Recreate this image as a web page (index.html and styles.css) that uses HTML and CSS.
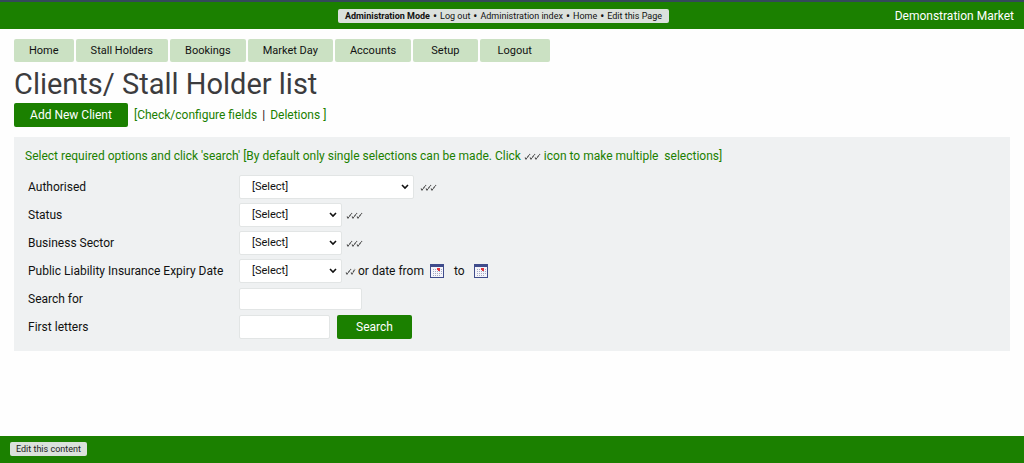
FILE: index.html
```html
<!DOCTYPE html>
<html lang="en">
<head>
    <meta charset="UTF-8">
    <meta name="viewport" content="width=device-width, initial-scale=1.0">
    <title>Clients/ Stall Holder list</title>
    <link rel="stylesheet" href="styles.css">
</head>
<body>

    <!-- Shared icons -->
    <svg class="sprite" aria-hidden="true">
        <symbol id="icon-multi" viewBox="0 0 17 8">
            <path d="M1 5.500l1 1.500L6 2M6 5.500l1 1.500L11 2M11 5.500l1 1.500L16 2" fill="none" stroke="#4a4a4a" stroke-width="1.100" stroke-dasharray="3 .6"/>
        </symbol>
        <symbol id="icon-multi-short" viewBox="0 0 11 8">
            <path d="M1 5.500l1 1.500L6 2M6 5.500l1 1.500L10 2" fill="none" stroke="#4a4a4a" stroke-width="1.100" stroke-dasharray="3 .6"/>
        </symbol>
        <symbol id="icon-calendar" viewBox="0 0 14 14">
            <rect width="14" height="14" fill="#3f4c8c"/>
            <rect x="1" y="3" width="12" height="10" fill="#f4f4fa"/>
            <path d="M3 5.500h9M3 7.500h9M3 9.500h9M3 11.500h7" stroke="#a3a9c4" stroke-width="1" stroke-dasharray="1 1"/>
            <path d="M7 4h3v3H8V6H7z" fill="#e0343c"/>
        </symbol>
    </svg>

    <header class="topbar">
        <nav class="admin-links">
            <strong>Administration Mode</strong>
            <span>•</span>
            <a href="#">Log out</a>
            <span>•</span>
            <a href="#">Administration index</a>
            <span>•</span>
            <a href="#">Home</a>
            <span>•</span>
            <a href="#">Edit this Page</a>
        </nav>
        <div class="site-name">Demonstration Market</div>
    </header>

    <main>
        <nav class="tabs">
            <a href="#">Home</a>
            <a href="#">Stall Holders</a>
            <a href="#">Bookings</a>
            <a href="#">Market Day</a>
            <a href="#">Accounts</a>
            <a href="#" class="roomy">Setup</a>
            <a href="#" class="roomy">Logout</a>
        </nav>

        <h1>Clients/ Stall Holder list</h1>

        <div class="actions">
            <button type="button" class="btn btn-add">Add New Client</button>
            <span class="links">[<a href="#">Check/configure fields</a> <b>|</b> <a href="#">Deletions</a> ]</span>
        </div>

        <form class="search-form">
            <p class="hint">Select required options and click 'search' [By default only single selections can be made. Click <svg class="multi"><use href="#icon-multi"/></svg> icon to make multiple &nbsp;selections]</p>

            <div class="row">
                <label for="authorised">Authorised</label>
                <select id="authorised" class="wide">
                    <option>[Select]</option>
                </select>
                <svg class="multi"><use href="#icon-multi"/></svg>
            </div>
            <div class="row">
                <label for="status">Status</label>
                <select id="status">
                    <option>[Select]</option>
                </select>
                <svg class="multi"><use href="#icon-multi"/></svg>
            </div>
            <div class="row">
                <label for="sector">Business Sector</label>
                <select id="sector">
                    <option>[Select]</option>
                </select>
                <svg class="multi"><use href="#icon-multi"/></svg>
            </div>
            <div class="row">
                <label for="expiry">Public Liability Insurance Expiry Date</label>
                <select id="expiry">
                    <option>[Select]</option>
                </select>
                <svg class="multi-short"><use href="#icon-multi-short"/></svg>
                <div class="dates">
                    <span>or date from</span>
                    <button type="button" class="calendar" aria-label="Date from"><svg><use href="#icon-calendar"/></svg></button>
                    <span class="to">to</span>
                    <button type="button" class="calendar" aria-label="Date to"><svg><use href="#icon-calendar"/></svg></button>
                </div>
            </div>
            <div class="row">
                <label for="searchFor">Search for</label>
                <input type="text" id="searchFor" class="search-for">
            </div>
            <div class="row">
                <label for="letters">First letters</label>
                <input type="text" id="letters" class="letters">
                <button type="button" class="btn btn-search">Search</button>
            </div>
        </form>
    </main>

    <footer class="bottombar">
        <button type="button" class="edit">Edit this content</button>
    </footer>

</body>
</html>
```

FILE: styles.css
```css
* {
    box-sizing: border-box;
}

body {
    display: flex;
    flex-direction: column;
    min-height: 100vh;
    margin: 0;
    background-color: #fefefe;
    color: #111;
    font-family: Roboto, "Liberation Sans", sans-serif;
    font-size: 12px;
    line-height: 16px;
}

a {
    color: inherit;
    text-decoration: none;
}

button, input, select {
    font: inherit;
}

.sprite {
    display: none;
}

/* Top bar */
.topbar {
    display: grid;
    grid-template-columns: 1fr auto 1fr;
    align-items: center;
    padding: 1px 10px 0;
    height: 29px;
    border-top: 2px solid #34495a;
    background-color: #1b8000;
}

.admin-links {
    grid-column: 2;
    display: flex;
    gap: 3px;
    margin-right: 17px;
    padding: 0 7px;
    border-radius: 2px;
    background-color: #dbe1dc;
    font-size: 9px;
    line-height: 14px;
}

.admin-links span {
    font-size: 12px;
}

.site-name {
    color: #fff;
    text-align: right;
}

main {
    flex: 1;
    padding: 10px 14px 0;
}

/* Navigation tabs */
.tabs {
    display: flex;
    gap: 2px;
}

.tabs a {
    padding: 4px 15px 3px;
    border-radius: 2px;
    background-color: #cbe1c3;
    font-size: 11px;
}

.tabs .roomy {
    padding-left: 18px;
    padding-right: 18px;
}

h1 {
    margin: 5px 0 2px;
    color: #3c3c3e;
    font-size: 29px;
    font-weight: 400;
    line-height: 34px;
}

.actions {
    display: flex;
    align-items: center;
    gap: 6px;
}

.links {
    color: #1b8000;
}

.links b {
    margin: 0 2px;
    color: #111;
    font-weight: 400;
}

.btn {
    height: 24px;
    padding: 0;
    border: none;
    border-radius: 2px;
    background-color: #1b8000;
    color: #fff;
    cursor: pointer;
}

.btn-add {
    width: 114px;
}

.btn-search {
    width: 75px;
    margin-left: 7px;
}

/* Search form */
.search-form {
    margin-top: 10px;
    padding: 11px 12px 10px 14px;
    background-color: #eff1f2;
}

.hint {
    margin: 0 0 9px -3px;
    color: #1b8000;
}

.multi {
    width: 17px;
    height: 8px;
}

.multi-short {
    width: 11px;
    height: 8px;
    margin-left: 3px;
}

.row {
    display: flex;
    align-items: center;
    height: 28px;
}

.row label {
    width: 211px;
}

.row .multi {
    margin-left: 4px;
}

.row .wide + .multi {
    margin-left: 6px;
}

select, input[type="text"] {
    width: 103px;
    height: 24px;
    border: 1px solid #e2e5e5;
    border-radius: 2px;
    background-color: #fff;
    color: #111;
}

select {
    appearance: none;
    padding: 0 16px 0 12px;
    background-image: url("data:image/svg+xml,%3Csvg xmlns='http://www.w3.org/2000/svg' width='8' height='6'%3E%3Cpath d='M1 1l3 3 3-3' fill='none' stroke='%23111' stroke-width='1.6'/%3E%3C/svg%3E");
    background-repeat: no-repeat;
    background-position: right 4px center;
    font-size: 11px;
}

select.wide {
    width: 175px;
}

input.search-for {
    width: 123px;
    height: 22px;
}

input.letters {
    width: 91px;
}

.dates {
    display: flex;
    align-items: center;
    margin-left: 2px;
}

.dates .to {
    margin-left: 10px;
    margin-right: 3px;
}

.calendar {
    display: flex;
    margin-left: 6px;
    padding: 0;
    border: none;
    background: none;
    cursor: pointer;
}

.calendar svg {
    width: 14px;
    height: 14px;
}

/* Footer */
.bottombar {
    display: flex;
    align-items: center;
    height: 27px;
    padding: 0 10px 2px;
    background-color: #1b8000;
}

.edit {
    height: 14px;
    padding: 0 6px;
    border: none;
    border-radius: 2px;
    background-color: #dbe1dc;
    color: #222;
    font-size: 9px;
    line-height: 14px;
    cursor: pointer;
}
```
